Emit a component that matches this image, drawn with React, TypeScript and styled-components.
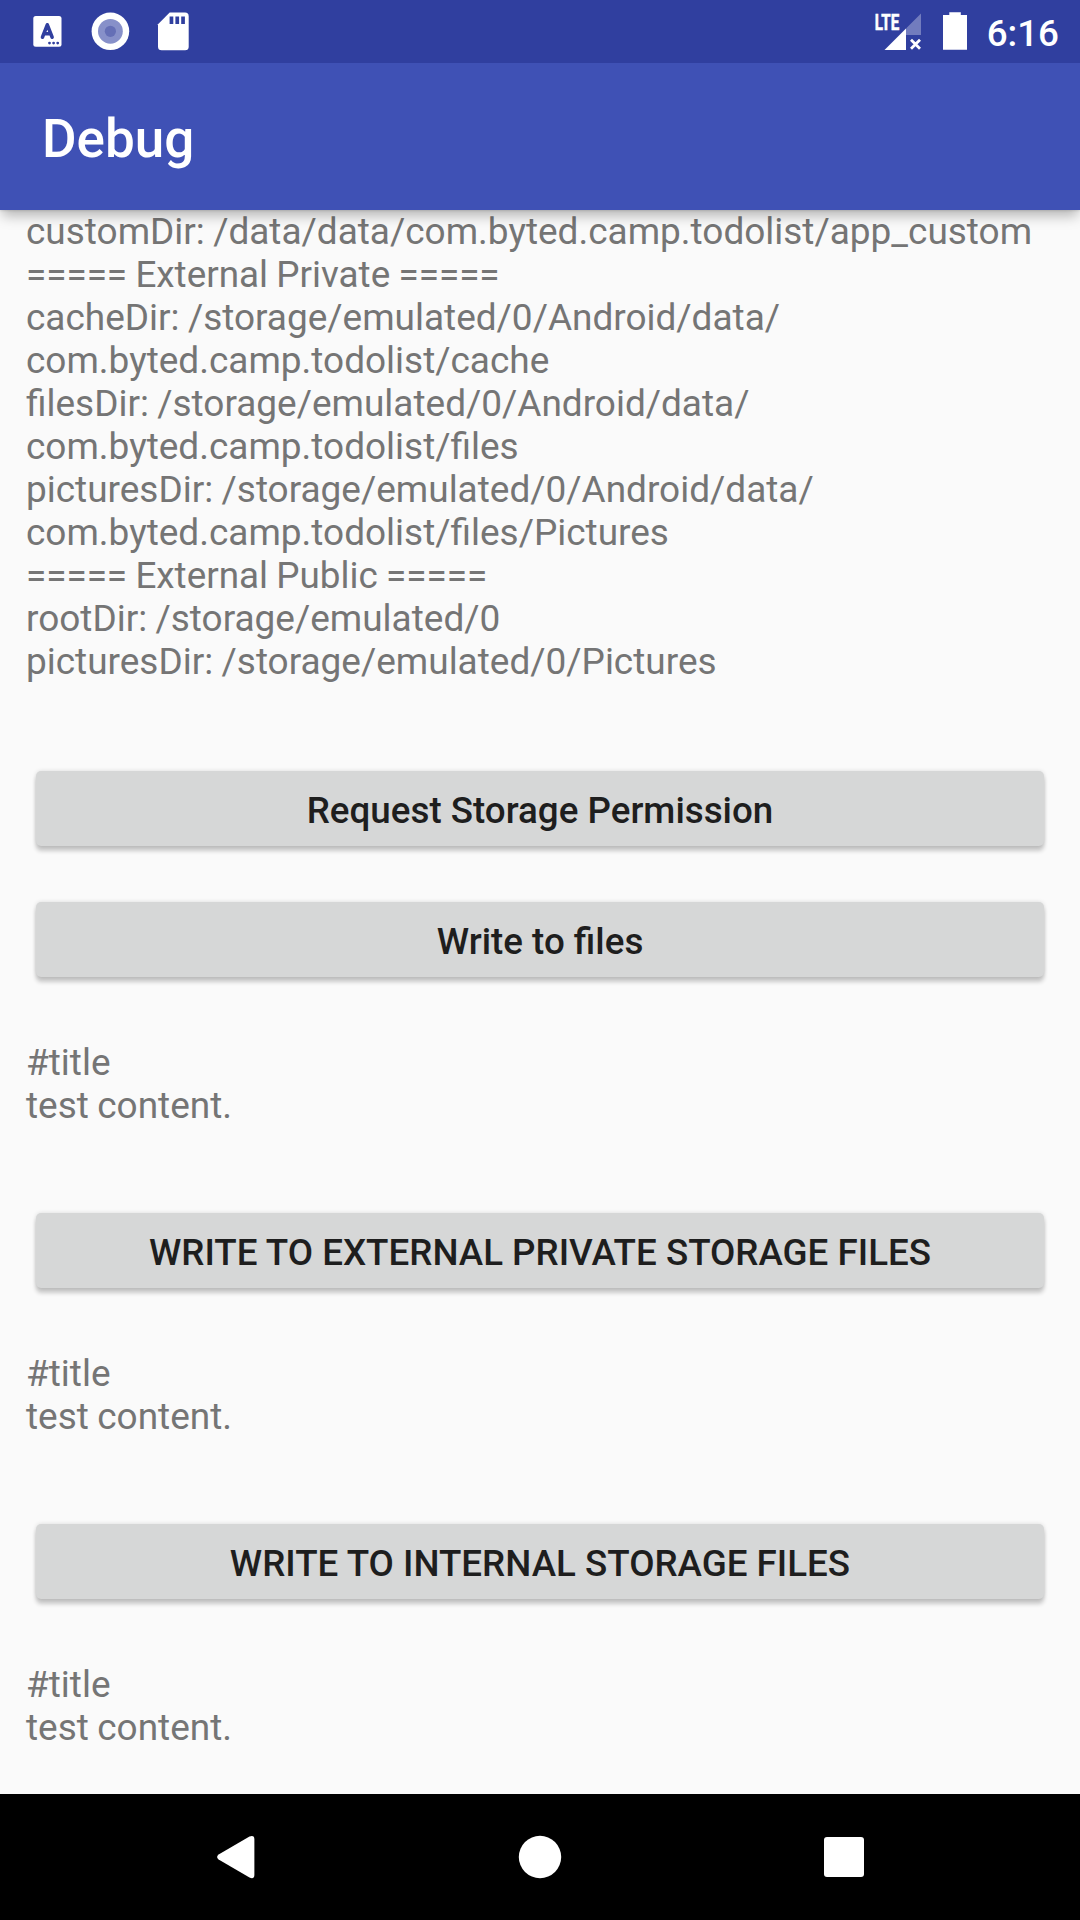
import React from "react";
import styled, { createGlobalStyle } from "styled-components";

const GlobalStyle = createGlobalStyle`
  body { margin: 0; background: #fafafa; }
`;

const Screen = styled.div`
  width: 1080px;
  height: 1920px;
  display: flex;
  flex-direction: column;
  overflow: hidden;
  background: #fafafa;
  font-family: Roboto, "Noto Sans", sans-serif;
  font-size: 36.75px;
  line-height: 43px;
`;

const StatusBar = styled.header`
  flex: none;
  height: 63px;
  display: flex;
  justify-content: space-between;
  background: #303f9f;
  color: #fff;
  z-index: 2;
`;

const StatusGroup = styled.div`
  display: flex;
`;

const StatusIcon = styled.svg`
  display: block;
  height: 63px;
`;

const Clock = styled.time`
  padding: 12px 21px 0 17px;
  font-weight: 500;
`;

const AppBar = styled.div`
  flex: none;
  box-sizing: border-box;
  height: 147px;
  padding: 45px 42px 0;
  background: #3f51b5;
  box-shadow: 0 8px 12px -2px rgba(0, 0, 0, 0.27), 0 0 3px rgba(0, 0, 0, 0.2);
  z-index: 1;
`;

const Title = styled.h1`
  margin: 0;
  font-size: 53px;
  line-height: 62px;
  font-weight: 500;
  color: #fff;
`;

const Content = styled.main`
  flex: 1;
  display: flex;
  flex-direction: column;
`;

const Log = styled.div<{ $before?: number; $after?: number }>`
  margin: ${(p) => p.$before ?? 0}px 26px ${(p) => p.$after ?? 0}px;
  color: #757575;
  font-size: 36.97px;
  word-spacing: -0.8px;
  white-space: pre;
`;

const LogLine = styled.div<{ $heading: boolean }>`
  height: 43px;
  font-size: ${(p) => (p.$heading ? 36.85 : 36.97)}px;
`;

const Button = styled.button<{ $after: number }>`
  box-sizing: border-box;
  flex: none;
  height: 75px;
  margin: 0 36px ${(p) => p.$after}px;
  padding: 18px 0 14px;
  border: 0;
  border-radius: 5px;
  background: #d6d7d7;
  box-shadow: 0 5px 4px rgba(0, 0, 0, 0.2), 0 0 4px rgba(0, 0, 0, 0.13);
  color: #1e1e1e;
  font: inherit;
  font-weight: 500;
  text-align: center;
`;

const NavBar = styled.nav`
  flex: none;
  height: 126px;
  display: flex;
  justify-content: center;
  background: #000;
`;

const NavIcon = styled.svg`
  display: block;
  width: 304px;
  height: 126px;
`;

const paths = [
  "customDir: /data/data/com.byted.camp.todolist/app_custom",
  "===== External Private =====",
  "cacheDir: /storage/emulated/0/Android/data/",
  "com.byted.camp.todolist/cache",
  "filesDir: /storage/emulated/0/Android/data/",
  "com.byted.camp.todolist/files",
  "picturesDir: /storage/emulated/0/Android/data/",
  "com.byted.camp.todolist/files/Pictures",
  "===== External Public =====",
  "rootDir: /storage/emulated/0",
  "picturesDir: /storage/emulated/0/Pictures",
];

const fileText = "#title\ntest content.";

export default function App() {
  return (
    <>
      <GlobalStyle />
      <Screen>
        <StatusBar>
          <StatusGroup>
            <StatusIcon width="200" viewBox="0 0 200 63" fill="#fff">
              <rect x="33.3" y="16" width="28.2" height="30.8" rx="2.5" />
              <path d="M42.5 37.2 47.3 24.8 52.1 37.2M44 33.8H50.6" fill="none" stroke="#303f9f" strokeWidth="3.6" strokeLinecap="round" strokeLinejoin="round" />
              <g fill="#303f9f">
                <circle cx="49.5" cy="43.1" r="1.4" />
                <circle cx="53.6" cy="43.1" r="1.4" />
                <circle cx="57.7" cy="43.1" r="1.4" />
              </g>
              <circle cx="110.4" cy="31.3" r="18.8" />
              <circle cx="110.4" cy="31.3" r="12.4" fill="#8790c9" />
              <circle cx="110.4" cy="31.3" r="5.6" fill="#656fb6" />
              <path d="M169.7 12.5H185Q188.7 12.5 188.7 16.2V46.8Q188.7 50.3 185 50.3H161.7Q158 50.3 158 46.8V24.2Z" />
              <path d="M169.6 16.5h3.7v7.5h-3.7zM175.4 16.5h3.7v7.5h-3.7zM181.2 16.5h3.7v7.5h-3.7z" fill="#303f9f" />
            </StatusIcon>
          </StatusGroup>
          <StatusGroup>
            <StatusIcon width="100" viewBox="870 0 100 63" fill="#fff">
              <text x="874.8" y="29.6" fontSize="22.5" fontWeight="700" stroke="#fff" strokeWidth="0.6" textLength="24.4" lengthAdjust="spacingAndGlyphs">LTE</text>
              <path d="M884.5 50 906 28.5V50Z" />
              <path d="M906 28.5 921 13.5V35H906Z" opacity=".32" />
              <path d="m911 39.7 9 9m0-9-9 9" stroke="#fff" strokeWidth="2.8" />
              <path d="M949.3 12.3H960.8V15H967V49.8H943V15H949.3Z" />
            </StatusIcon>
            <Clock>6:16</Clock>
          </StatusGroup>
        </StatusBar>
        <AppBar>
          <Title>Debug</Title>
        </AppBar>
        <Content>
          <Log $after={88}>
            {paths.map((line, i) => (
              <LogLine key={i} $heading={line.startsWith("=")}>{line}</LogLine>
            ))}
          </Log>
          <Button $after={56}>Request Storage Permission</Button>
          <Button $after={0}>Write to files</Button>
          <Log $before={64} $after={86}>{fileText}</Log>
          <Button $after={0}>WRITE TO EXTERNAL PRIVATE STORAGE FILES</Button>
          <Log $before={64} $after={86}>{fileText}</Log>
          <Button $after={0}>WRITE TO INTERNAL STORAGE FILES</Button>
          <Log $before={64}>{fileText}</Log>
        </Content>
        <NavBar>
          <NavIcon viewBox="84 0 304 126" fill="#fff">
            <path d="M218.6 60.6 249.5 42.6Q254.4 40.8 254.4 45.5V80.8Q254.4 85.6 249.5 83.6L218.6 65.6Q215.6 63.1 218.6 60.6Z" />
          </NavIcon>
          <NavIcon viewBox="388 0 304 126" fill="#fff">
            <circle cx="540" cy="63" r="21.2" />
          </NavIcon>
          <NavIcon viewBox="692 0 304 126" fill="#fff">
            <rect x="824" y="43" width="40" height="40" rx="3" />
          </NavIcon>
        </NavBar>
      </Screen>
    </>
  );
}
